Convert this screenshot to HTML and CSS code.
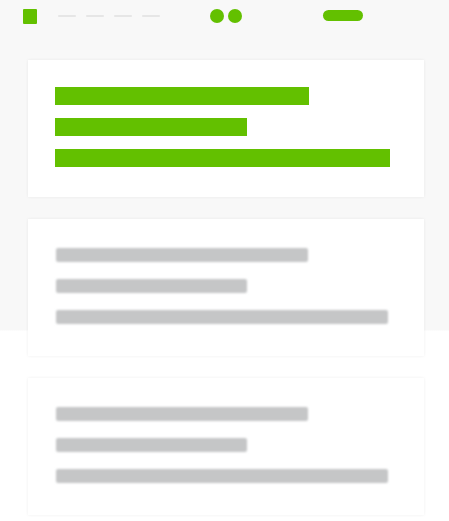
FILE: index.html
```html
<!DOCTYPE html>
<html lang="en">
<head>
<meta charset="utf-8">
<title>Loading</title>
<link rel="stylesheet" href="styles.css">
</head>
<body>
<div class="page">
  <header class="topbar">
    <div class="logo"></div>
    <nav class="nav">
      <span class="dash"></span>
      <span class="dash"></span>
      <span class="dash"></span>
      <span class="dash"></span>
    </nav>
    <div class="dots">
      <span class="dot"></span>
      <span class="dot"></span>
    </div>
    <div class="pill"></div>
  </header>
  <main class="cards">
    <section class="card">
      <div class="bar green w1"></div>
      <div class="bar green w2"></div>
      <div class="bar green w3"></div>
    </section>
    <section class="card">
      <div class="bar gray w1"></div>
      <div class="bar gray w2"></div>
      <div class="bar gray w3g"></div>
    </section>
    <section class="card">
      <div class="bar gray w1"></div>
      <div class="bar gray w2"></div>
      <div class="bar gray w3g"></div>
    </section>
  </main>
</div>
</body>
</html>
```

FILE: styles.css
```css
html, body {
  margin: 0;
  padding: 0;
  background: #ffffff;
  font-family: "Liberation Sans", Arial, sans-serif;
}

.page {
  width: 449px;
  height: 521px;
  overflow: hidden;
  background: linear-gradient(#f8f8f8 0, #f8f8f8 330px, #ffffff 331px);
}

.topbar {
  height: 30px;
  display: flex;
  align-items: center;
  padding-left: 23px;
  padding-top: 1px;
}

.logo {
  width: 14px;
  height: 15px;
  background: #63c000;
  border-radius: 1px;
}

.nav {
  display: flex;
  margin-left: 21px;
  gap: 10px;
}

.dash {
  width: 18px;
  height: 2px;
  background: #e6e6e6;
  border-radius: 1px;
}

.dots {
  display: flex;
  gap: 4px;
  margin-left: 50px;
}

.dot {
  width: 14px;
  height: 14px;
  border-radius: 50%;
  background: #63c000;
}

.pill {
  width: 40px;
  height: 11px;
  border-radius: 6px;
  background: #63c000;
  margin-left: 81px;
  margin-top: -2px;
}

.cards {
  display: flex;
  flex-direction: column;
  gap: 22px;
  padding: 29px 25px 0 28px;
}

.card {
  background: #ffffff;
  height: 137px;
  box-sizing: border-box;
  padding: 27px 0 0 27px;
  display: flex;
  flex-direction: column;
  gap: 13px;
  box-shadow: 0 0 3px rgba(0, 0, 0, 0.07);
}

.bar {
  height: 18px;
}

.green {
  background: #63c000;
}

.gray {
  background: #c5c6c7;
  height: 14px;
  margin: 2px 0 2px 1px;
  border-radius: 2px;
  filter: blur(0.8px);
}

.w1 { width: 254px; }
.w2 { width: 192px; }
.w3 { width: 335px; }
.gray.w1 { width: 252px; }
.gray.w2 { width: 191px; }
.w3g { width: 332px; }
```
